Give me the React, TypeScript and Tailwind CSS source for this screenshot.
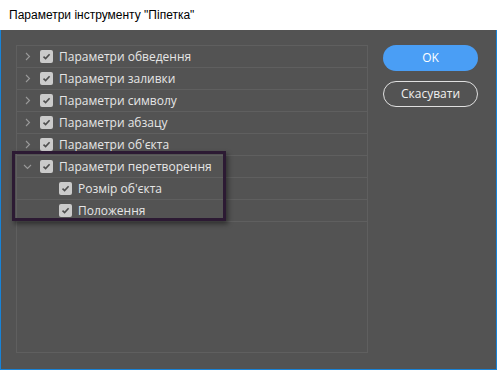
import React from "react";

type Row = { label: string; open?: boolean; child?: boolean };

const rows: Row[] = [
  { label: "Параметри обведення" },
  { label: "Параметри заливки" },
  { label: "Параметри символу" },
  { label: "Параметри абзацу" },
  { label: "Параметри об'єкта" },
  { label: "Параметри перетворення", open: true },
  { label: "Розмір об'єкта", child: true },
  { label: "Положення", child: true },
];

function Check() {
  return (
    <span className="flex h-[13px] w-[13px] shrink-0 items-center justify-center rounded-[2px] bg-[#cbcbcb]">
      <svg width="9" height="9" viewBox="0 0 9 9" fill="none">
        <path d="M1.5 4.6 L3.6 6.6 L7.6 2.2" stroke="#4e4e4e" strokeWidth="1.6" />
      </svg>
    </span>
  );
}

function Chevron({ open }: { open?: boolean }) {
  return (
    <svg width="9" height="9" viewBox="0 0 9 9" fill="none" className="shrink-0">
      {open ? (
        <path d="M1 3 L4.5 6.5 L8 3" stroke="#9a9a9a" strokeWidth="1.1" />
      ) : (
        <path d="M3 1 L6.5 4.5 L3 8" stroke="#9a9a9a" strokeWidth="1.1" />
      )}
    </svg>
  );
}

export default function App() {
  return (
    <div className="flex h-[370px] w-[497px] flex-col overflow-hidden bg-white" style={{ fontFamily: "'Open Sans', 'Noto Sans', sans-serif" }}>
      {/* Title bar */}
      <div className="flex h-[30px] shrink-0 items-center pl-[9px] font-['Liberation_Sans',sans-serif] text-[12px] text-black">
        Параметри інструменту "Піпетка"
      </div>

      {/* Body */}
      <div className="flex flex-1 border-x border-b border-[#1883d7] bg-[#535353] pt-[15px]">
        <div className="relative ml-[15px] flex h-[308px] w-[352px] flex-col border border-[#5f5f5f]">
          {rows.map((r) => (
            <div
              key={r.label}
              className={`flex h-[22px] shrink-0 items-center border-b border-[#5f5f5f] text-[12px] text-[#e6e6e6] ${r.child ? "pl-[42px]" : "pl-[6px]"}`}
            >
              {!r.child && <Chevron open={r.open} />}
              <span className={r.child ? "" : "ml-[8px]"}>
                <Check />
              </span>
              <span className="ml-[6px] leading-none">{r.label}</span>
            </div>
          ))}
          {/* highlight frame */}
          <div className="absolute left-[-5px] top-[105px] h-[70px] w-[214px] border-[3px] border-[#2c1a33] shadow-[2px_3px_5px_rgba(0,0,0,0.45)]" />
        </div>

        <div className="ml-[15px] flex flex-col gap-[10px]">
          <button className="h-[26px] w-[95px] rounded-full bg-[#4a9ef5] text-[12px] text-white">
            OK
          </button>
          <button className="h-[26px] w-[95px] rounded-full border border-[#e0e0e0] text-[12px] text-[#f0f0f0]">
            Скасувати
          </button>
        </div>
      </div>
    </div>
  );
}
